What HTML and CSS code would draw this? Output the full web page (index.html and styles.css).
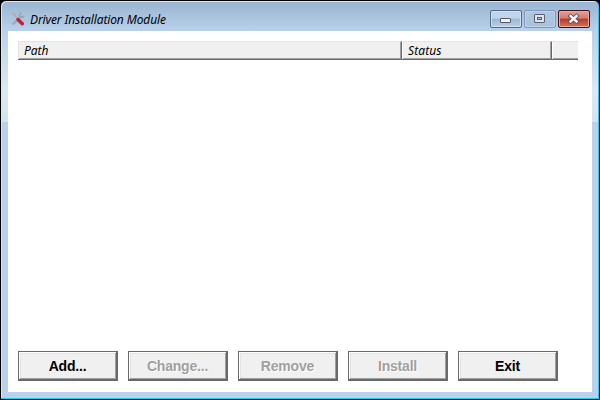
FILE: index.html
```html
<!DOCTYPE html>
<html lang="en">
<head>
<meta charset="utf-8">
<title>Driver Installation Module</title>
<link rel="stylesheet" href="styles.css">
</head>
<body>
<div class="window">
  <header class="titlebar">
    <svg class="app-icon" width="14" height="14" viewBox="0 0 14 14">
      <path d="M2.200 11.800L9.500 4.800" stroke="#a0a8b4" stroke-width="2.400" stroke-linecap="round"/>
      <path d="M10.300 1Q8 2 8.800 4.500Q10.500 6.500 13 4" fill="none" stroke="#9ca4af" stroke-width="1.800"/>
      <path d="M1.500 1.500L3.500 2.500L7 7" fill="none" stroke="#b3acac" stroke-width="2"/>
      <path d="M7 7.500L11.300 11.700" stroke="#c31f35" stroke-width="3.400" stroke-linecap="round"/>
    </svg>
    <h1 class="title">Driver Installation Module</h1>
    <div class="controls">
      <button class="control" aria-label="Minimize"><svg width="12" height="12" viewBox="0 0 12 12"><rect x=".5" y="5.500" width="10" height="4" rx=".5" fill="#f4f4f4" stroke="#555769"/></svg></button>
      <button class="control control-max" aria-label="Maximize"><svg width="12" height="12" viewBox="0 0 12 12"><rect x=".5" y="1.500" width="10" height="8" rx=".5" fill="#dfe4ea" stroke="#5b6072"/><rect x="3.500" y="4.500" width="4" height="2" fill="#a8c2df" stroke="#5b6072"/></svg></button>
      <button class="control control-close" aria-label="Close"><svg width="12" height="12" viewBox="0 0 12 12"><path d="M2.500 3L8.500 8.500M8.500 3L2.500 8.500" stroke="#4f4c5b" stroke-width="4" stroke-linecap="square"/><path d="M2.500 3L8.500 8.500M8.500 3L2.500 8.500" stroke="#f4f4f4" stroke-width="2.400" stroke-linecap="square"/></svg></button>
    </div>
  </header>
  <main class="client">
    <div class="list-header">
      <div class="column column-path">Path</div>
      <div class="column column-status">Status</div>
      <div class="column column-rest"></div>
    </div>
    <div class="list"></div>
    <div class="actions">
      <button class="action">Add...</button>
      <button class="action" disabled>Change...</button>
      <button class="action" disabled>Remove</button>
      <button class="action" disabled>Install</button>
      <button class="action">Exit</button>
    </div>
  </main>
</div>
</body>
</html>
```
FILE: styles.css
```css
* { box-sizing: border-box; }
body { margin: 0; background: #000; }
.window {
  width: 600px;
  height: 400px;
  display: flex;
  flex-direction: column;
  padding: 0 7px 7px;
  border: 1px solid #000;
  border-radius: 6px 6px 0 0;
  background:
    linear-gradient(#b9d1ea 0, #dce8f5 60px, #d3e2f4 91px, #b9d1ea 91px) 0 30px / 100% 100% no-repeat,
    linear-gradient(#99b4d1, #b9d1ea) 0 0 / 100% 30px no-repeat;
  box-shadow: inset -1px -1px #28cbe9, inset 1px 1px #d9e7f5;
}
.titlebar {
  flex: 0 0 30px;
  display: flex;
  align-items: flex-start;
  padding: 9px 2px 0 3px;
}
.app-icon { margin-top: 2px; }
.title {
  margin: 1px auto 0 5px;
  font: italic 400 12px/18px "Noto Sans", sans-serif;
  color: #000;
  letter-spacing: -.12px;
}
.controls { display: flex; gap: 2px; }
.control {
  width: 32px;
  height: 18px;
  padding: 0;
  display: flex;
  align-items: center;
  justify-content: center;
  border: 1px solid #536b8b;
  border-radius: 2px;
  background: linear-gradient(#c1d4e9 0 45%, #9bb7d5 50%, #b8d0e9);
  box-shadow: inset 0 0 0 1px #d0e0f0;
}
.control-max {
  border-color: #7e9abc;
  background: linear-gradient(#afc7e0, #a9c3df);
  box-shadow: inset 0 0 0 1px #bdd1e7;
}
.control-close {
  border-color: #43101c;
  background: linear-gradient(#dfa298 0, #d37d6d 45%, #b83926 50%, #d3725c);
  box-shadow: inset 0 0 0 1px #e4aba1;
}
.client {
  flex: 1;
  display: flex;
  flex-direction: column;
  padding: 10px 10px 11px;
  background: #fff;
}
.list-header {
  display: flex;
  width: 560px;
  height: 19px;
  border-bottom: 1px solid #696969;
}
.column {
  padding-left: 5px;
  border-top: 1px solid #e3e3e3;
  border-left: 1px solid #e3e3e3;
  border-right: 1px solid #696969;
  background: #f0f0f0;
  box-shadow: inset -1px -1px #a0a0a0;
  font: italic 12px/18px "Noto Sans", sans-serif;
  color: #000;
}
.column-path { width: 384px; }
.column-status { width: 150px; border-left-color: #fff; letter-spacing: .1px; }
.column-rest { flex: 1; border-right: 0; border-left-color: #fff; box-shadow: inset 0 -1px #a0a0a0; }
.list { flex: 1; }
.actions { display: flex; gap: 10px; }
.action {
  width: 100px;
  height: 30px;
  padding: 1px 0 0;
  border: 1px solid #696969;
  border-right-width: 2px;
  border-bottom-width: 2px;
  border-radius: 0;
  background: #f0f0f0;
  box-shadow: inset 1px 1px #fff, inset -1px -1px #a0a0a0, inset 2px 2px #e3e3e3;
  font: bold 14px/20px "Liberation Sans", sans-serif;
  letter-spacing: -.2px;
  color: #000;
}
.action:disabled { color: #a0a0a0; text-shadow: 1px 1px #fff; }
```
